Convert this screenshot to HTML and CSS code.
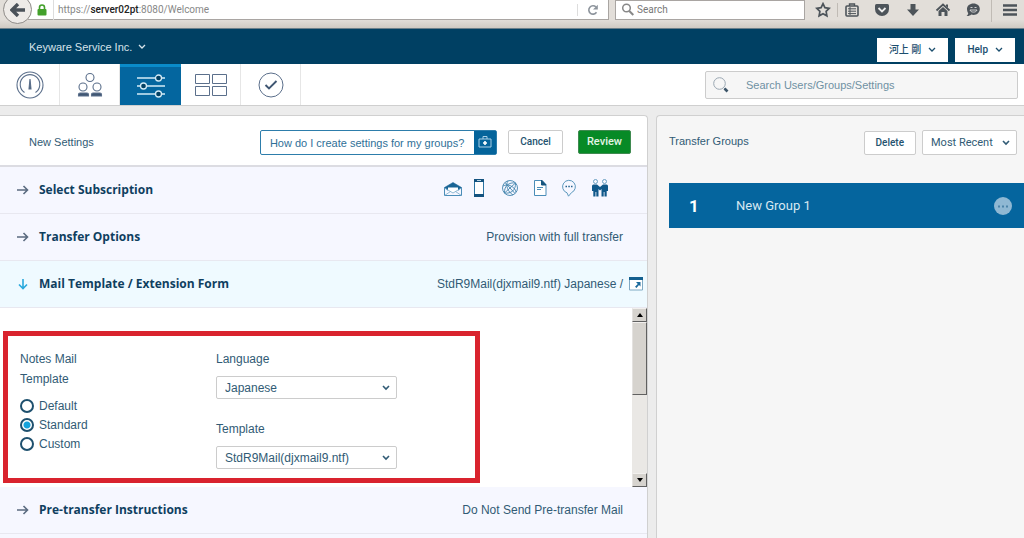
FILE: index.html
```html
<!DOCTYPE html>
<html lang="en">
<head>
<meta charset="utf-8">
<title>New Settings</title>
<link rel="stylesheet" href="styles.css">
</head>
<body>
<div class="browser">
  <button class="back" aria-label="Back"><svg width="16" height="14" viewBox="0 0 16 14"><path d="M8 1 2 7l6 6M3 7h12" fill="none" stroke="#4b5259" stroke-width="3.4"/></svg></button>
  <div class="address">
    <svg class="lock" width="10" height="12" viewBox="0 0 10 12"><path d="M2.500 6V3.500a2.500 2.500 0 0 1 5 0V6" fill="none" stroke="#43a02b" stroke-width="1.600"/><rect x="0.500" y="5" width="9" height="6.500" rx="1" fill="#43a02b"/></svg>
    <div class="url">https://<b>server02pt</b>:8080/Welcome</div>
    <button class="reload" aria-label="Reload"><svg width="12" height="12" viewBox="0 0 12 12"><path d="M9.500 8.300A4.200 4.200 0 1 1 9 3" fill="none" stroke="#8d949c" stroke-width="1.600"/><path d="M10.800.8v4.700H6z" fill="#8d949c"/></svg></button>
  </div>
  <label class="websearch">
    <svg width="14" height="14" viewBox="0 0 14 14" fill="none" stroke="#888"><circle cx="5.500" cy="5" r="3.800" stroke-width="1.500"/><path d="m8.300 8 4 4" stroke-width="2"/></svg>
    <input type="text" placeholder="Search" aria-label="Web search">
  </label>
  <div class="tools">
    <button aria-label="Bookmark"><svg width="16" height="16" viewBox="0 0 16 16"><path d="m8 1.700 1.900 4 4.400.6-3.200 3.100.8 4.400L8 11.700l-3.900 2.100.8-4.400L1.700 6.300l4.400-.6z" fill="none" stroke="#4d545a" stroke-width="1.700"/></svg></button>
    <i class="bar"></i>
    <button aria-label="Bookmarks list"><svg width="16" height="16" viewBox="0 0 16 16" fill="none" stroke="#4d545a"><rect x="2" y="4" width="12" height="10" rx="1" stroke-width="1.600"/><path d="M5.500 4V2h5v2" stroke-width="1.400"/><path d="M4 6.800h8M4 9.200h8M4 11.600h8M6 5v8"/></svg></button>
    <button aria-label="Pocket"><svg width="16" height="16" viewBox="0 0 16 16"><path d="M2.500 2h11q1.500 0 1.500 1.500V7a7 7 0 0 1-14 0V3.500Q1 2 2.500 2z" fill="#4d545a"/><path d="m4.500 6 3.500 3.500L11.500 6" fill="none" stroke="#eee" stroke-width="1.800"/></svg></button>
    <button aria-label="Downloads"><svg width="16" height="16" viewBox="0 0 16 16"><path d="M5.500 2h5v5.500H14L8 14 2 7.500h3.500z" fill="#4d545a"/></svg></button>
    <button aria-label="Home"><svg width="16" height="16" viewBox="0 0 16 16"><path d="M1.500 8.500 8 2.500l6.500 6" fill="none" stroke="#4d545a" stroke-width="1.800"/><path d="M3.500 9 8 5l4.500 4v5h-3v-4h-3v4h-3zM11 2.500h2V6l-2-2z" fill="#4d545a"/></svg></button>
    <button aria-label="Chat"><svg width="16" height="16" viewBox="0 0 16 16"><path d="M8.500 1.500c3.700 0 6.300 2.300 6.300 5.500s-2.600 6-6.300 6c-.8 0-1.500-.1-2.200-.4C5 13.800 3 14.400 1.500 14c1-.7 1.600-1.600 1.700-2.800C2.500 10 2 8.500 2 7c0-3.200 2.800-5.500 6.500-5.500z" fill="#4d545a"/><path d="M5.500 5.500h2M9.500 5.500h2M5 8h7c-.7 2.800-6.300 2.800-7 0z" stroke="#ddd" stroke-width=".9" fill="none"/></svg></button>
    <i class="bar tall"></i>
    <button aria-label="Menu"><svg width="16" height="16" viewBox="0 0 16 16"><path d="M1 3.500h14M1 8h14M1 12.500h14" stroke="#4d545a" stroke-width="2.400"/></svg></button>
  </div>
</div>

<header class="top">
  <button class="org">Keyware Service Inc. <svg width="8" height="6" viewBox="0 0 8 6"><path d="m1 1 3 3 3-3"/></svg></button>
  <div class="account">
    <button>河上 剛 <svg width="8" height="6" viewBox="0 0 8 6"><path d="m1 1 3 3 3-3"/></svg></button>
    <button>Help <svg width="8" height="6" viewBox="0 0 8 6"><path d="m1 1 3 3 3-3"/></svg></button>
  </div>
</header>

<nav class="nav">
  <a href="#dashboard" aria-label="Dashboard"><svg width="28" height="28" viewBox="0 0 28 28" fill="none" stroke="#5b6f8b" stroke-width="1.100"><circle cx="14" cy="14" r="13"/><path d="M8.500 21.500A9.800 9.800 0 1 1 19.500 21.500"/><path d="m14 8-1 10h2z" fill="#24405f"/></svg></a>
  <a href="#groups" aria-label="Groups"><svg width="26" height="26" viewBox="0 0 26 26" fill="none" stroke="#5b6f8b" stroke-width="1.100"><circle cx="13" cy="5.500" r="4"/><circle cx="6" cy="15" r="4"/><circle cx="20" cy="15" r="4"/><path d="M1.500 24v-1.500q0-1.500 1.500-1.500h7q1.500 0 1.500 1.500V24zM14.500 24v-1.500q0-1.500 1.500-1.500h7q1.500 0 1.500 1.500V24z" fill="#405672"/></svg></a>
  <a class="on" href="#settings" aria-label="Settings"><svg width="30" height="24" viewBox="0 0 30 24" fill="#024063" stroke="#d3ebf7" stroke-width="1.300"><path d="M1 4h28M1 12h28M1 20h28"/><circle cx="22.500" cy="4" r="3"/><circle cx="7.500" cy="12" r="3"/><circle cx="22.500" cy="20" r="3"/></svg></a>
  <a href="#layout" aria-label="Layout"><svg width="34" height="22" viewBox="0 0 34 22" fill="none" stroke="#5b6f8b"><path d="M1.500.5h14v9h-14zM18.500.5h14v9h-14zM1.500 12.500h14v9h-14zM18.500 12.500h14v9h-14z"/></svg></a>
  <a href="#tasks" aria-label="Tasks"><svg width="26" height="26" viewBox="0 0 26 26" fill="none" stroke="#5b6f8b"><circle cx="13" cy="13" r="12"/><path d="m7.500 13 3.500 3.500L18.500 9" stroke="#3f5672" stroke-width="1.900"/></svg></a>
  <label class="find">
    <svg width="18" height="18" viewBox="0 0 18 18" fill="none"><circle cx="7.500" cy="7.500" r="5.800" stroke="#9aa7b2"/><path d="m11.500 11.500 2 2" stroke="#9aa7b2"/><path d="m12.500 12.500 3 3" stroke="#3b5468" stroke-width="2.600"/></svg>
    <input type="text" placeholder="Search Users/Groups/Settings" aria-label="Search Users/Groups/Settings">
  </label>
</nav>

<main class="main">
  <section class="panel settings">
    <div class="head">
      <h1>New Settings</h1>
      <a class="howto" href="#help"><span>How do I create settings for my groups?</span><i><svg width="14" height="14" viewBox="0 0 14 14" fill="none" stroke="#a9cfe6"><path d="M1 4h12v8H1zM5 4V1.500h4V4"/><path d="M7 6v4M5 8h4" stroke="#fff" stroke-width="1.600"/></svg></i></a>
      <button class="btn">Cancel</button>
      <button class="btn go">Review</button>
    </div>
    <div class="row">
      <svg class="arrow" width="12" height="10" viewBox="0 0 12 10"><path d="M0 5h10.500M6.500 1l4 4-4 4"/></svg>
      <h2>Select Subscription</h2>
      <div class="kinds">
        <svg width="18" height="18" viewBox="0 0 18 18" fill="none" stroke="#4a8db8"><path d="M.5 8.500v8h17v-8"/><path d="M.5 8.500 9 3.500l8.500 5-3.500 2.700V9.500H4v1.700z" fill="#1a6595" stroke="#1a6595" stroke-width=".6"/><path d="M4 8.500h10v3l-5 2.500-5-2.500z" fill="#fff" stroke="none"/><path d="m.5 9 8.500 5 8.500-5M.5 16.500l6-4M17.500 16.500l-6-4" stroke="#76a9c9" stroke-width=".8"/></svg>
        <svg class="phone" width="12" height="18" viewBox="0 0 12 18"><path d="M1.500.5h9v17h-9z" fill="#fff" stroke="#2b74a2"/><path d="M1 0h10v3H1zM1 15h10v3H1z" fill="#14537f"/><path d="M4 1.500h4" stroke="#b9d5e6"/></svg>
        <svg width="18" height="18" viewBox="0 0 18 18" fill="none" stroke="#4385ae" stroke-width=".9"><circle cx="9" cy="9" r="7.500"/><path d="M3.500 14 14.500 4M3.500 14C3 7 8 3 14.500 4M3.500 14C10 15 15 11 14.500 4M4 3.500 14 14.500M2 7c5-3 12 1 13 6M7 2c-3 4 0 11 5 14"/></svg>
        <svg width="14" height="18" viewBox="0 0 14 18" fill="none" stroke="#4a8db8"><path d="M1.500 1.500H9l4 4v11H1.500z" fill="#fff"/><path d="M8.500 1v5H13z" fill="#16557f" stroke="#16557f"/><path d="M4 8.500h6M4 10.500h4" stroke-width="1"/></svg>
        <svg width="16" height="18" viewBox="0 0 16 18" fill="none" stroke="#5c98bd"><path d="M6 13.800A6.400 6.400 0 1 1 10.500 13.600L7.500 17.200z"/><path d="M4.500 7.500H6M7.300 7.500h1.500M10 7.500h1.500" stroke="#24638d" stroke-width="1.500"/></svg>
        <svg width="18" height="18" viewBox="0 0 18 18"><g fill="none" stroke="#6aa0c2"><circle cx="4.500" cy="2.500" r="2"/><circle cx="13.500" cy="2.500" r="2"/></g><path d="M2.500 5.500H6l3 2.500 3-2.500h3.500q1.500 0 1.500 1.500v5h-1.300v5.500h-2.200V13h-.8v4.500h-2.200V10L9 11.500 7.500 10v7.500H5.300V13h-.8v4.500H2.300V12H1V7q0-1.500 1.500-1.500z" fill="#10588a"/></svg>
      </div>
    </div>
    <div class="row">
      <svg class="arrow" width="12" height="10" viewBox="0 0 12 10"><path d="M0 5h10.500M6.500 1l4 4-4 4"/></svg>
      <h2>Transfer Options</h2>
      <p>Provision with full transfer</p>
    </div>
    <div class="row open">
      <svg class="arrow" width="12" height="12" viewBox="0 0 12 12"><path d="M6 1v9.500M2 6.500l4 4 4-4"/></svg>
      <h2>Mail Template / Extension Form</h2>
      <p>StdR9Mail(djxmail9.ntf) Japanese /</p>
      <button class="popout" aria-label="Open in window"><svg width="14" height="14" viewBox="0 0 14 14"><path d="M.5.500h13v12.500H.5z" fill="#fff" stroke="#7fa9c4"/><path d="M0 0h14v3H0z" fill="#13608f"/><path d="M7 5h4.500v4.500L10 8l-2.500 3L6 9.700 8.800 7z" fill="#1b6a9c"/></svg></button>
    </div>
    <div class="body">
      <form class="frame">
        <fieldset class="radios">
          <legend>Notes Mail Template</legend>
          <label><input type="radio" name="kind">Default</label>
          <label><input type="radio" name="kind" checked>Standard</label>
          <label><input type="radio" name="kind">Custom</label>
        </fieldset>
        <div class="fields">
          <label for="language">Language</label>
          <div class="pick"><select id="language"><option>Japanese</option></select><svg width="8" height="6" viewBox="0 0 8 6"><path d="m1 1 3 3 3-3"/></svg></div>
          <label for="template">Template</label>
          <div class="pick"><select id="template"><option>StdR9Mail(djxmail9.ntf)</option></select><svg width="8" height="6" viewBox="0 0 8 6"><path d="m1 1 3 3 3-3"/></svg></div>
        </div>
      </form>
      <div class="scroll">
        <button aria-label="Scroll up"><svg width="6" height="4" viewBox="0 0 6 4"><path d="M0 4h6L3 0z"/></svg></button>
        <div class="thumb"></div>
        <div class="track"></div>
        <button aria-label="Scroll down"><svg width="6" height="4" viewBox="0 0 6 4"><path d="M0 0h6L3 4z"/></svg></button>
      </div>
    </div>
    <div class="row">
      <svg class="arrow" width="12" height="10" viewBox="0 0 12 10"><path d="M0 5h10.500M6.500 1l4 4-4 4"/></svg>
      <h2>Pre-transfer Instructions</h2>
      <p>Do Not Send Pre-transfer Mail</p>
    </div>
    <div class="rest"></div>
  </section>

  <section class="panel groups">
    <div class="ghead">
      <h1>Transfer Groups</h1>
      <button class="btn">Delete</button>
      <div class="pick sort"><select aria-label="Sort"><option>Most Recent</option></select><svg width="8" height="6" viewBox="0 0 8 6"><path d="m1 1 3 3 3-3"/></svg></div>
    </div>
    <div class="group">
      <b>1</b><span>New Group 1</span>
      <button aria-label="More"><svg width="18" height="18" viewBox="0 0 18 18"><circle cx="9" cy="9" r="9" fill="#8fb8d3"/><path d="M4 9.500h2M8 9.500h2M12 9.500h2" stroke="#4b83a9" stroke-width="2"/></svg></button>
    </div>
  </section>
</main>
</body>
</html>
```
FILE: styles.css
```css
* { box-sizing: border-box; }
body {
  margin: 0;
  height: 100vh;
  overflow: hidden;
  display: flex;
  flex-direction: column;
  background: #ececec;
  color: #315b75;
  font: 11px/20px "Liberation Sans", Arial, "Noto Sans CJK JP", sans-serif;
}
button, input, select { font: inherit; color: inherit; margin: 0; padding: 0; border: 0; background: none; }
button { display: flex; align-items: center; justify-content: center; }
h1, h2, p { margin: 0; font-size: 11px; font-weight: 400; }
svg { display: block; flex: none; }
a { color: inherit; text-decoration: none; }

.browser {
  flex: none;
  height: 29px;
  padding: 0 6px 8px 3px;
  display: flex;
  background: linear-gradient(#e2ded9 70%, #cfcac3);
  border-bottom: 1px solid #6b7f8a;
  font: 10px/20px Roboto, sans-serif;
}
.back {
  flex: none;
  width: 29px;
  height: 29px;
  margin-top: -5px;
  border: 1px solid #8e8b88;
  border-radius: 50%;
  background: #eeebe8;
  z-index: 1;
}
.address {
  flex: 1;
  margin-left: -4px;
  padding: 0 9px;
  display: flex;
  align-items: center;
  background: #fff;
  border: solid #a9a5a2;
  border-width: 0 1px 1px 0;
}
.url { flex: 1; margin-left: 6px; border-left: 1px solid #ddd; padding-left: 4px; color: #888; }
.url b { color: #222; font-weight: 500; }
.reload { border-left: 1px solid #ddd; padding-left: 9px; }
.websearch {
  width: 190px;
  margin-left: 6px;
  padding-left: 5px;
  display: flex;
  align-items: center;
  gap: 2px;
  background: #fff;
  border: 1px solid #a9a5a2;
}
.websearch input { flex: 1; min-width: 0; }
::placeholder { color: #777; opacity: 1; }
.tools { width: 213px; padding-left: 10px; display: flex; align-items: center; justify-content: space-between; }
.bar { width: 1px; height: 14px; background: #c0bbb5; margin: 0 -8px; }
.bar.tall { height: 24px; margin: 0 -4px; }

.top {
  flex: none;
  height: 35px;
  padding: 0 9px 0 29px;
  display: flex;
  justify-content: space-between;
  background: #004063;
}
.org { gap: 6px; color: #d7e3ea; }
.org svg, .account svg, .pick svg { fill: none; stroke: currentColor; stroke-width: 1.3; }
.account { display: flex; align-items: flex-end; gap: 7px; padding-bottom: 2px; }
.account button { height: 24px; padding: 0 12px; gap: 7px; background: #fff; color: #1b4e6e; font-family: Roboto, "Noto Sans CJK JP", sans-serif; font-size: 10px; font-weight: 500; }

.nav { flex: none; height: 42px; display: flex; background: #fff; border-bottom: 1px solid #cfcfcf; }
.nav a { width: 60px; display: flex; align-items: center; justify-content: center; border-right: 1px solid #e6e6e6; }
.nav .on { width: 61px; background: #04669f; border-top: 3px solid #0a8bc9; border-right: 0; }
.find {
  width: 313px;
  margin: 7px 6px 6px auto;
  padding-left: 6px;
  display: flex;
  align-items: center;
  gap: 16px;
  background: #f6f6f6;
  border: 1px solid #ccc;
  border-radius: 2px;
}
.find input { flex: 1; min-width: 0; }
.find ::placeholder { color: #6f91a3; }

.main { flex: 1; min-height: 0; margin-top: 9px; display: grid; grid-template-columns: 648fr 368fr; gap: 8px; }
.panel { min-width: 0; border: 1px solid #d0d0d0; border-bottom: 0; }
.settings { display: flex; flex-direction: column; border-left: 0; border-top-right-radius: 4px; background: #fff; }
.head { height: 51px; flex: none; padding: 3px 16px 0 29px; display: flex; align-items: center; border-bottom: 2px solid #dcdce2; }
.howto { margin-left: auto; height: 25px; display: flex; border: 1px solid #2d7dab; border-radius: 2px; color: #2f7098; }
.howto span { padding: 0 10px 0 9px; line-height: 24px; }
.howto i { width: 22px; display: grid; place-items: center; background: #04649b; }
.btn { height: 24px; padding: 0 11px; background: #fff; border: 1px solid #ccc; border-radius: 2px; color: #24536f; font: 500 10px/20px Roboto, sans-serif; }
.head .btn { margin-left: 11px; }
.head .go { margin-left: 15px; padding: 0 8px; background: #078a26; border-color: #3f8a50; color: #e4f5e6; font-size: 11px; }
.row { flex: none; height: 47px; padding: 0 24px 0 17px; display: flex; align-items: center; background: #f6f7ff; border-bottom: 1px solid #e8e8f0; }
.row h2 { margin: 0 auto 0 10px; color: #0f3f5f; font: 700 12px/20px "Open Sans", sans-serif; }
.arrow { fill: none; stroke: #5b6b80; stroke-width: 1.6; }
.open { background: #effaff; padding-right: 4px; }
.open .arrow { stroke: #2aa9dc; }
.popout { margin-left: 6px; }
.kinds { display: flex; gap: 14px; padding: 0 14px 4px 0; }
.kinds .phone { margin: 0 2px 0 -3px; }
.row p, .body { font-size: 12px; }
.body { flex: none; height: 179px; display: flex; justify-content: space-between; background: #fff; }
.frame {
  width: 477px;
  margin: 23px 0 4px 3px;
  padding: 13px 12px 0;
  display: flex;
  border: 5px solid #d9232e;
}
.radios { width: 196px; margin: 0; padding: 0; border: 0; }
.radios legend { width: 80px; padding: 0; margin-bottom: 7px; }
.radios label { display: flex; align-items: center; gap: 5px; height: 19px; }
.radios input { appearance: none; width: 14px; height: 14px; border: 2px solid #1e506e; border-radius: 50%; background: #fff; }
.radios input:checked { background: radial-gradient(#16a3dc 3px, #fff 4px); }
.fields { width: 181px; }
.fields label { display: block; }
.fields .pick { height: 23px; margin: 7px 0 20px; }
.pick { display: grid; align-items: center; }
.pick > * { grid-area: 1 / 1; }
.pick select { appearance: none; width: 100%; height: 100%; padding: 0 8px; background: #fff; border: 1px solid #ccc; border-radius: 2px; }
.pick svg { justify-self: end; margin-right: 7px; stroke-width: 1.6; }
.scroll { width: 15px; display: flex; flex-direction: column; background: #eae8e5; }
.scroll button, .thumb { height: 14px; background: #d6d3ce; border: 1px solid; border-color: #f2f0ee #606060 #606060 #e4e2e0; }
.scroll .thumb { height: 73px; }
.track { flex: 1; }
.rest { flex: 1; background: #f6f7ff; }

.groups { border-right: 0; border-top-left-radius: 4px; background: #f6f6f6; padding-left: 12px; }
.ghead { height: 67px; padding: 14px 7px 0 0; display: flex; align-items: flex-start; gap: 6px; }
.ghead h1 { margin: 1px auto 0 0; }
.ghead .btn { margin-top: 1px; }
.sort { width: 95px; height: 25px; font-family: Roboto, sans-serif; }
.group { height: 45px; padding: 0 12px 0 20px; display: flex; align-items: center; background: #05659e; color: #d8e8f2; font-family: Roboto, sans-serif; }
.group b { width: 47px; font-size: 17px; color: #fff; }
.group span { font-size: 13px; }
.group button { margin-left: auto; }
```
